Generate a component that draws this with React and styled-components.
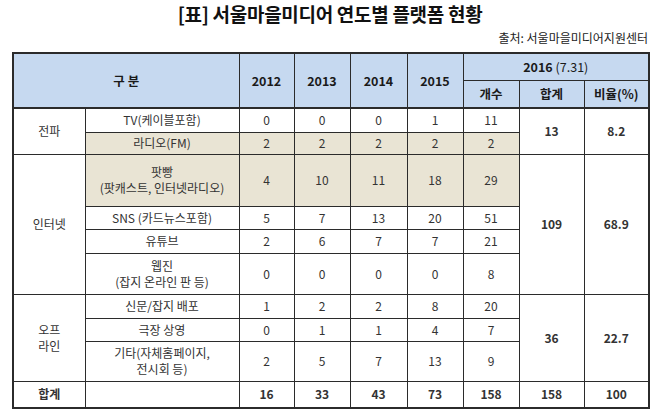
import React from 'react';
import styled, { createGlobalStyle } from 'styled-components';

const GlobalStyle = createGlobalStyle`
  html, body {
    margin: 0;
    padding: 0;
    background: #ffffff;
  }
  body {
    font-family: "Noto Sans CJK KR", "Noto Sans", sans-serif;
    color: #222;
  }
`;

const colWidths = [72, 154, 55, 56, 57, 56, 56, 65, 65];

const rows = [
  { group: '전파', span: 2, label: 'TV(케이블포함)', values: [0, 0, 0, 1, 11], total: 13, ratio: '8.2', h: 24 },
  { label: '라디오(FM)', values: [2, 2, 2, 2, 2], beige: true, h: 22 },
  { group: '인터넷', span: 4, label: ['팟빵', '(팟캐스트, 인터넷라디오)'], values: [4, 10, 11, 18, 29], total: 109, ratio: '68.9', beige: true, h: 52 },
  { label: 'SNS (카드뉴스포함)', values: [5, 7, 13, 20, 51], h: 23 },
  { label: '유튜브', values: [2, 6, 7, 7, 21], h: 24 },
  { label: ['웹진', '(잡지 온라인 판 등)'], values: [0, 0, 0, 0, 8], h: 41 },
  { group: ['오프', '라인'], span: 3, label: '신문/잡지 배포', values: [1, 2, 2, 8, 20], total: 36, ratio: '22.7', h: 24 },
  { label: '극장 상영', values: [0, 1, 1, 4, 7], h: 23 },
  { label: ['기타(자체홈페이지,', '전시회 등)'], values: [2, 5, 7, 13, 9], h: 40 },
];

const Page = styled.div`
  width: 664px;
  height: 420px;
  padding: 0 16px 0 12px;
  box-sizing: border-box;
`;

const Title = styled.h1`
  margin: 0;
  padding-top: 2px;
  font-size: 19px;
  line-height: 24px;
  font-weight: 700;
  text-align: center;
  color: #111;
  letter-spacing: -0.3px;
`;

const Source = styled.div`
  text-align: right;
  font-size: 12px;
  line-height: 16px;
  margin-top: 4px;
  color: #222;
`;

const Table = styled.table`
  margin-top: 6px;
  width: 636px;
  border-collapse: collapse;
  table-layout: fixed;
  border: 2px solid #2b2b2b;
`;

const Col = styled.col`
  width: ${p => p.$w}px;
`;

const Row = styled.tr`
  height: ${p => p.$h}px;
`;

const Cell = styled.td`
  border: 1px solid #2b2b2b;
  padding: 0;
  text-align: center;
  vertical-align: middle;
  font-size: 12px;
  line-height: 16px;
  color: #333;
  background: ${p => (p.$beige ? '#e9e4d4' : '#ffffff')};
  font-weight: ${p => (p.$bold ? 700 : 400)};
`;

const Head = styled.th`
  border: 1px solid #2b2b2b;
  border-bottom: ${p => (p.$last ? '2px solid #2b2b2b' : '1px solid #2b2b2b')};
  padding: 0;
  background: #c6d9f0;
  font-size: 12.5px;
  font-weight: 700;
  color: #1a1a1a;
  text-align: center;
  vertical-align: middle;
`;

const Light = styled.span`
  font-weight: 400;
`;

const Line = styled.div`
  white-space: nowrap;
`;

const Lines = ({ text }) =>
  Array.isArray(text)
    ? text.map((t, i) => <Line key={i}>{t}</Line>)
    : text;

export default function App() {
  return (
    <Page>
      <GlobalStyle />
      <Title>[표] 서울마을미디어 연도별 플랫폼 현황</Title>
      <Source>출처: 서울마을미디어지원센터</Source>
      <Table>
        <colgroup>
          {colWidths.map((w, i) => (
            <Col key={i} $w={w} />
          ))}
        </colgroup>
        <thead>
          <Row $h={27}>
            <Head colSpan={2} rowSpan={2} $last>구 분</Head>
            <Head rowSpan={2} $last>2012</Head>
            <Head rowSpan={2} $last>2013</Head>
            <Head rowSpan={2} $last>2014</Head>
            <Head rowSpan={2} $last>2015</Head>
            <Head colSpan={3}>2016 <Light>(7.31)</Light></Head>
          </Row>
          <Row $h={28}>
            <Head $last>개수</Head>
            <Head $last>합계</Head>
            <Head $last>비율(%)</Head>
          </Row>
        </thead>
        <tbody>
          {rows.map((r, i) => (
            <Row key={i} $h={r.h}>
              {r.group && (
                <Cell rowSpan={r.span}>
                  <Lines text={r.group} />
                </Cell>
              )}
              <Cell $beige={r.beige}>
                <Lines text={r.label} />
              </Cell>
              {r.values.map((v, j) => (
                <Cell key={j} $beige={r.beige}>{v}</Cell>
              ))}
              {r.group && (
                <>
                  <Cell rowSpan={r.span} $bold>{r.total}</Cell>
                  <Cell rowSpan={r.span} $bold>{r.ratio}</Cell>
                </>
              )}
            </Row>
          ))}
          <Row $h={27}>
            <Cell $bold>합계</Cell>
            <Cell />
            {[16, 33, 43, 73, 158, 158, 100].map((v, j) => (
              <Cell key={j} $bold>{v}</Cell>
            ))}
          </Row>
        </tbody>
      </Table>
    </Page>
  );
}
